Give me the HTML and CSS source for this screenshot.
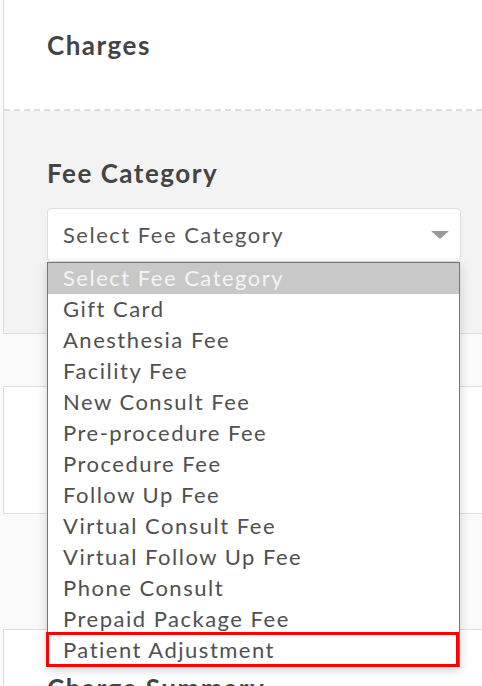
FILE: index.html
```html
<!DOCTYPE html>
<html lang="en">
<head>
    <meta charset="UTF-8">
    <meta name="viewport" content="width=device-width, initial-scale=1.0">
    <title>Charges</title>
    <link rel="stylesheet" href="styles.css">
</head>
<body>
    <div class="card">
        <div class="card-header">
            <h2>Charges</h2>
        </div>
        <div class="card-body">
            <label class="field-label">Fee Category</label>
            <div class="select-wrap">
                <div class="select-box">
                    <span>Select Fee Category</span>
                    <span class="caret"></span>
                </div>

                <!-- open dropdown list -->
                <ul class="select-menu">
                    <li class="selected">Select Fee Category</li>
                    <li>Gift Card</li>
                    <li>Anesthesia Fee</li>
                    <li>Facility Fee</li>
                    <li>New Consult Fee</li>
                    <li>Pre-procedure Fee</li>
                    <li>Procedure Fee</li>
                    <li>Follow Up Fee</li>
                    <li>Virtual Consult Fee</li>
                    <li>Virtual Follow Up Fee</li>
                    <li>Phone Consult</li>
                    <li>Prepaid Package Fee</li>
                    <li>Patient Adjustment</li>
                    <div class="mark"></div>
                </ul>
            </div>
        </div>
    </div>

    <div class="card card-plain"></div>

    <div class="card card-last">
        <h2>Charge Summary</h2>
    </div>
</body>
</html>
```

FILE: styles.css
```css
/* General styles */
body {
    font-family: Lato, "Open Sans", sans-serif;
    margin: 0;
    padding: 0;
    background-color: #fafafa;
    color: #505050;
    overflow: hidden;
}

h2 {
    margin: 0;
    font-size: 26px;
    line-height: 30px;
    font-weight: 700;
    letter-spacing: 1.5px;
    color: #444;
}

/* Cards */
.card {
    margin-left: 3px;
    border-left: 1px solid #ddd;
    border-bottom: 1px solid #ddd;
    background: white;
}

.card-header {
    padding: 30px 0 49px 43px;
    border-bottom: 2px dashed #ddd;
}

.card-body {
    background: #f3f3f3;
    padding: 47px 20px 71px 43px;
}

.card-plain {
    margin-top: 52px;
    height: 126px;
    border-top: 1px solid #ddd;
}

.card-last {
    margin-top: 115px;
    border-top: 1px solid #ddd;
    padding: 43px 0 40px 43px;
}

/* Select field */
.field-label {
    display: block;
    font-size: 26px;
    line-height: 30px;
    font-weight: 700;
    letter-spacing: 1.5px;
    color: #444;
    margin-bottom: 20px;
}

.select-wrap {
    position: relative;
    width: 414px;
}

.select-box {
    display: flex;
    justify-content: space-between;
    align-items: center;
    box-sizing: border-box;
    height: 54px;
    padding: 0 11px 2px 15px;
    border: 1px solid #ddd;
    border-radius: 4px;
    background: white;
    font-size: 22px;
    letter-spacing: 1.5px;
    color: #555;
}

.caret {
    width: 0;
    height: 0;
    border-left: 9px solid transparent;
    border-right: 9px solid transparent;
    border-top: 8px solid #999;
    margin-top: 2px;
}

/* Dropdown list */
.select-menu {
    position: absolute;
    top: 100%;
    left: 0;
    width: 413px;
    box-sizing: border-box;
    margin: 0;
    padding: 0;
    list-style: none;
    background: white;
    border: 1px solid #767676;
    box-shadow: 0 3px 10px rgba(0, 0, 0, 0.18);
}

.select-menu li {
    height: 31px;
    line-height: 29px;
    padding-left: 15px;
    font-size: 22px;
    letter-spacing: 1.5px;
    color: #505050;
    white-space: nowrap;
}

.select-menu li.selected {
    background: #c8c8c8;
    color: #f4f4f4;
}

.mark {
    position: absolute;
    left: -2px;
    top: 369px;
    width: 413px;
    height: 35px;
    box-sizing: border-box;
    border: 3px solid #ff0000;
}
```
